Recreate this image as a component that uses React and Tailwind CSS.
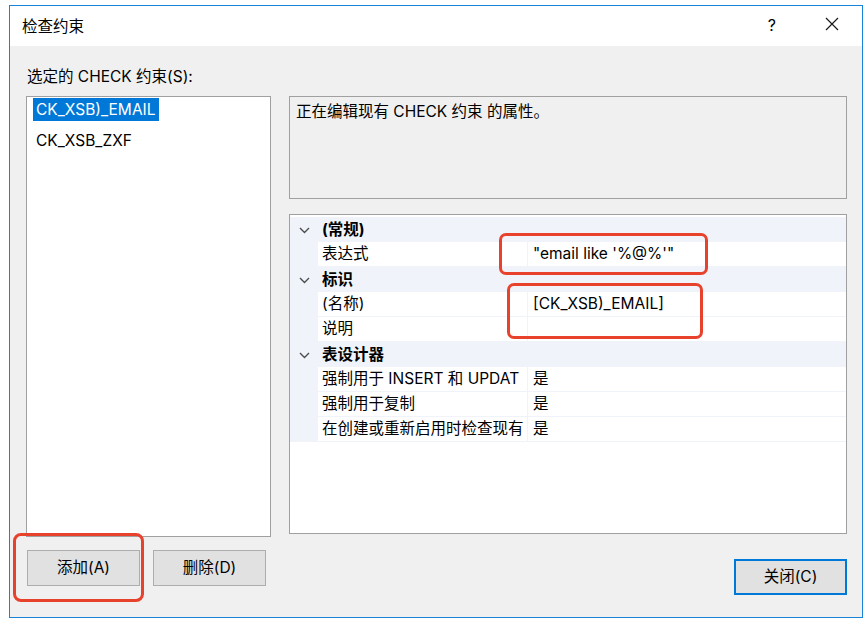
import React from 'react';

const FONT = { fontFamily: 'Inter, "Noto Sans CJK SC", sans-serif' };

const Chevron = () => (
  <svg width="11" height="7" viewBox="0 0 11 7" className="block">
    <polyline points="1,1 5.5,5.5 10,1" fill="none" stroke="#4d4d4d" strokeWidth="1.4" />
  </svg>
);

const CategoryRow = ({ title }) => (
  <div className="flex h-[25px] items-center bg-[#f0f4fa]">
    <div className="flex w-[28px] justify-center pt-[1px]">
      <Chevron />
    </div>
    <div className="pl-[4px] font-bold">{title}</div>
  </div>
);

const ItemRow = ({ label, value }) => (
  <div className="flex h-[25px] bg-[#f0f4fa] pb-px">
    <div className="w-[28px]" />
    <div className="flex w-[209px] items-center overflow-hidden whitespace-nowrap bg-white pl-[4px]">{label}</div>
    <div className="ml-px flex flex-1 items-center whitespace-nowrap bg-white pl-[5px]">{value}</div>
  </div>
);

const Btn = ({ children, primary, className = '' }) => (
  <button
    className={`flex h-[36px] w-[113px] items-center justify-center bg-[#e1e1e1] ${
      primary ? 'border-2 border-[#0078d7]' : 'border border-[#adadad]'
    } ${className}`}
  >
    {children}
  </button>
);

export default function App() {
  return (
    <div className="relative h-[625px] w-[867px] bg-white pl-[9px] pt-[5px] text-[15.5px] leading-[20px] text-black" style={FONT}>
      <div className="flex h-[613px] w-[854px] flex-col border border-[#1883d7]">
        {/* title bar */}
        <div className="flex h-[40px] items-center bg-white pl-[12px]">
          <span className="pt-[1px]">检查约束</span>
          <span className="ml-auto mr-[49px] pb-[3px] text-[16px]">?</span>
          <svg width="14" height="14" viewBox="0 0 14 14" className="mb-[4px] mr-[23px]">
            <path d="M1 1 L13 13 M13 1 L1 13" stroke="#1a1a1a" strokeWidth="1.2" fill="none" />
          </svg>
        </div>

        {/* body */}
        <div className="flex flex-1 bg-[#f0f0f0] pl-[16px] pr-[15px]">
          <div className="flex w-[245px] flex-col">
            <div className="h-[50px] pl-px pt-[21px]">选定的 CHECK 约束(S):</div>
            <div className="h-[441px] border border-[#a0a0a0] bg-white pl-[6px] pt-px">
              <div className="flex h-[23px]">
                <span className="flex items-center bg-[#0078d7] px-[3px] text-white">CK_XSB)_EMAIL</span>
              </div>
              <div className="mt-[8px] flex h-[23px] items-center pl-[3px]">CK_XSB_ZXF</div>
            </div>
            <div className="mt-[13px] flex gap-[13px] pl-px">
              <Btn className="w-[112px]">添加(A)</Btn>
              <Btn>删除(D)</Btn>
            </div>
          </div>

          <div className="ml-[18px] flex flex-1 flex-col pt-[50px]">
            <div className="h-[103px] border border-[#a0a0a0] bg-[#f0f0f0] pl-[6px] pt-[5px]">
              正在编辑现有 CHECK 约束 的属性。
            </div>
            <div className="mt-[15px] h-[320px] border border-[#a0a0a0] bg-white pt-[2px]">
              <CategoryRow title="(常规)" />
              <ItemRow label="表达式" value={'"email like \'%@%\'"'} />
              <CategoryRow title="标识" />
              <ItemRow label="(名称)" value="[CK_XSB)_EMAIL]" />
              <ItemRow label="说明" value="" />
              <CategoryRow title="表设计器" />
              <ItemRow label="强制用于 INSERT 和 UPDAT" value="是" />
              <ItemRow label="强制用于复制" value="是" />
              <ItemRow label="在创建或重新启用时检查现有" value="是" />
            </div>
            <div className="mt-[25px] flex justify-end">
              <Btn primary>关闭(C)</Btn>
            </div>
          </div>
        </div>
      </div>

      {/* red annotations */}
      <div className="absolute left-[499px] top-[233px] h-[42px] w-[209px] rounded-[7px] border-[3px] border-[#e8412c]" />
      <div className="absolute left-[507px] top-[283px] h-[56px] w-[196px] rounded-[7px] border-[3px] border-[#e8412c]" />
      <div className="absolute left-[13px] top-[533px] h-[69px] w-[131px] rounded-[8px] border-[3px] border-[#e8412c]" />
    </div>
  );
}
